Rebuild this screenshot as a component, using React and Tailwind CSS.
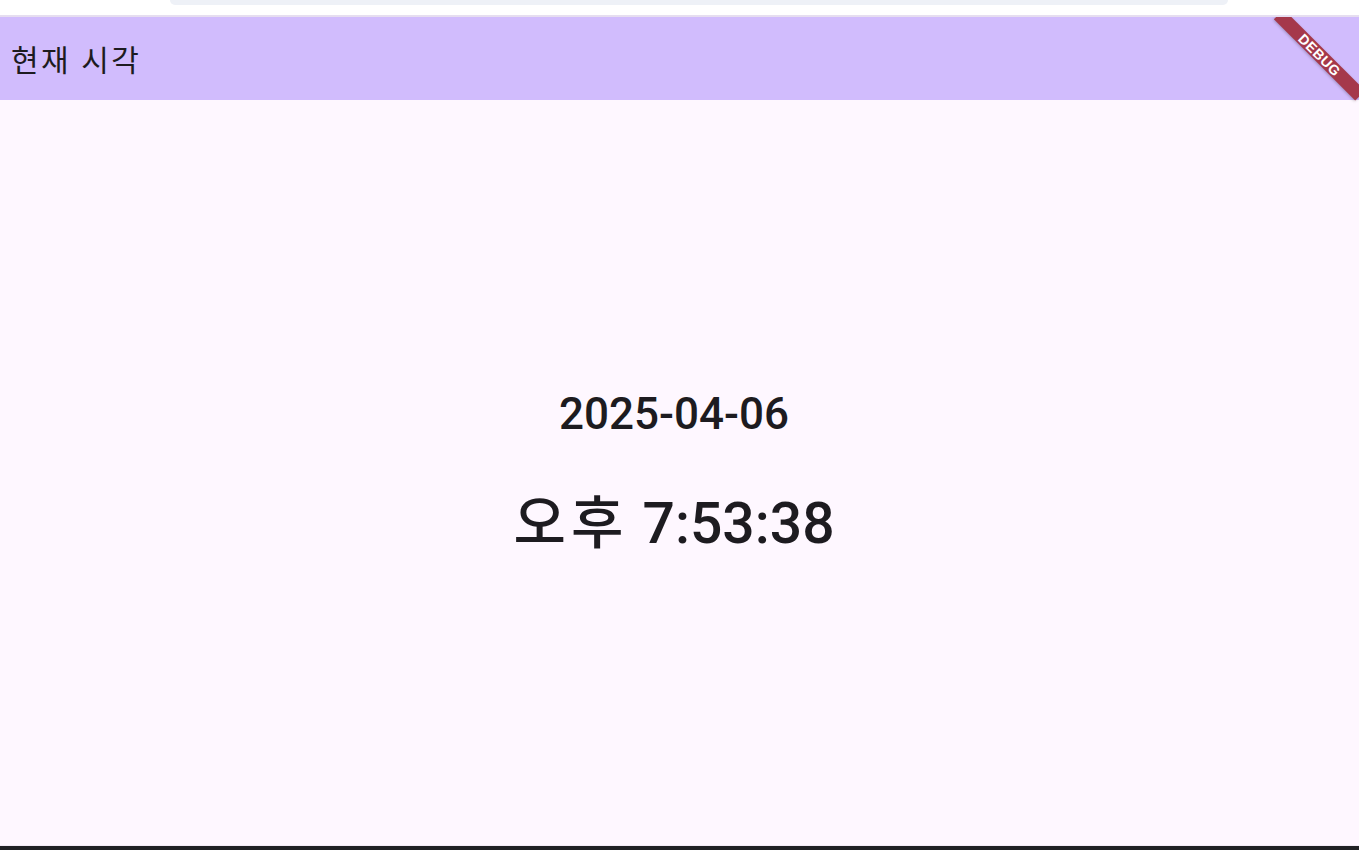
export default function App() {
  return (
    <div className="flex h-[850px] w-full flex-col overflow-hidden bg-white font-['Roboto','Noto_Sans_CJK_KR',sans-serif] text-[#1d1b20]">
      {/* browser chrome remnant */}
      <div className="h-[15px] shrink-0 bg-white">
        <div className="ml-[170px] h-[5px] w-[1058px] rounded-b-full bg-[#eef1f7]"></div>
      </div>
      <div className="h-[2px] shrink-0 bg-[#e6def0]"></div>

      <div className="relative flex flex-1 flex-col overflow-hidden">
        <header className="flex h-[83px] shrink-0 items-center bg-[#d1bcfd] pl-[11px] pt-[4px]">
          <h1 className="text-[30px] leading-[36px] font-normal tracking-[2.5px]">현재 시각</h1>
        </header>

        <main className="flex flex-1 flex-col items-center justify-center bg-[#fef7ff] pr-[11px]">
          <p className="text-[44px] leading-[53px] font-medium">2025-04-06</p>
          <p className="mt-[49px] text-[57px] leading-[68px] font-medium">
            <span className="tracking-[5px]">오후</span> 7:53:38
          </p>
        </main>

        {/* debug banner */}
        <div className="absolute right-0 top-0 h-[100px] w-[100px] overflow-hidden pointer-events-none">
          <div className="absolute left-[3px] top-[31px] flex h-[14px] w-[115px] rotate-45 items-center justify-center bg-[#a5384b] shadow-[0_1px_3px_rgba(0,0,0,0.25)]">
            <span className="font-['Liberation_Sans',sans-serif] text-[14px] leading-none font-bold tracking-[0.5px] text-white">DEBUG</span>
          </div>
        </div>

        <div className="h-[1px] shrink-0 bg-[#f3ebf6]"></div>
      </div>
      <div className="h-[4px] shrink-0 bg-[#202124]"></div>
    </div>
  );
}
